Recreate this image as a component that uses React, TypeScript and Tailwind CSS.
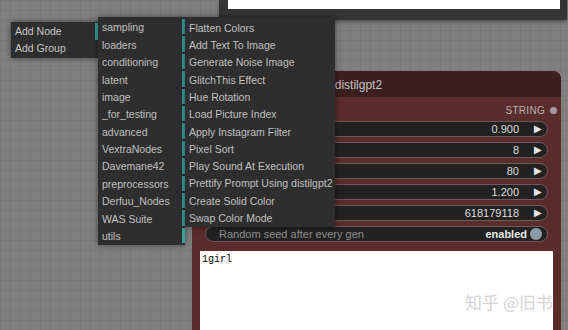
import React from 'react';

const categories = [
  'sampling',
  'loaders',
  'conditioning',
  'latent',
  'image',
  '_for_testing',
  'advanced',
  'VextraNodes',
  'Davemane42',
  'preprocessors',
  'Derfuu_Nodes',
  'WAS Suite',
  'utils',
];

const wasNodes = [
  'Flatten Colors',
  'Add Text To Image',
  'Generate Noise Image',
  'GlitchThis Effect',
  'Hue Rotation',
  'Load Picture Index',
  'Apply Instagram Filter',
  'Pixel Sort',
  'Play Sound At Execution',
  'Prettify Prompt Using distilgpt2',
  'Create Solid Color',
  'Swap Color Mode',
];

const numberWidgets = ['0.900', '8', '80', '1.200', '618179118'];

const gridBg =
  'bg-[#808080] bg-[linear-gradient(to_right,rgba(0,0,0,0.05)_1px,transparent_1px),linear-gradient(to_bottom,rgba(0,0,0,0.05)_1px,transparent_1px)] bg-[size:10px_10px]';

const NumberWidget: React.FC<{ value: string }> = ({ value }) => (
  <div className="h-[16px] rounded-full bg-[#222222] border border-[#6e5a5a] flex items-center justify-end pr-[5px] text-[11px] text-[#dddddd]">
    <span>{value}</span>
    <span className="ml-[15px] text-[10px] leading-none text-[#e6e6e6]">▶</span>
  </div>
);

export default function App() {
  return (
    <div
      className={`relative w-[568px] h-[330px] overflow-hidden ${gridBg}`}
      style={{ fontFamily: '"Liberation Sans", Arial, sans-serif' }}
    >
      {/* node above, mostly off screen */}
      <div className="absolute left-[219px] top-0 w-[348px] h-[20px] bg-[#353535] shadow-[0_2px_4px_rgba(0,0,0,0.35)]">
        <div className="ml-[9px] w-[332px] h-[9px] bg-white" />
      </div>

      {/* Prettify Prompt node */}
      <div className="absolute left-[192px] top-[71px] w-[369px] h-[270px] rounded-t-[8px] bg-[#5a2c2c] flex flex-col">
        <div className="h-[26px] shrink-0 rounded-t-[8px] bg-[#3d1e1e] flex items-center pl-[26px] pt-[1px] text-[12px] text-[#c4c4c4]">
          Prettify Prompt Using distilgpt2
        </div>
        <div className="pt-[6px] flex flex-col">
          <div className="h-[14px] flex items-center justify-end pr-[4px] text-[10px] text-[#b5b5b5] tracking-[0.3px]">
            <span>STRING</span>
            <span className="ml-[5px] w-[7px] h-[7px] rounded-full bg-[#a49ca4]" />
          </div>
          <div className="mt-[4px] mx-[13px] flex flex-col gap-[5px]">
            {numberWidgets.map((v) => (
              <NumberWidget key={v} value={v} />
            ))}
            <div className="h-[16px] rounded-full bg-[#222222] border border-[#6e5a5a] flex items-center justify-between pl-[13px] pr-[5px] text-[11px]">
              <span className="text-[#8e8e8e]">Random seed after every gen</span>
              <span className="flex items-center">
                <span className="font-bold text-[#e8e8e8]">enabled</span>
                <span className="ml-[3px] w-[12px] h-[12px] rounded-full bg-[#8d9cab]" />
              </span>
            </div>
          </div>
          <div className="mt-[9px] mx-[8px] h-[90px] bg-white relative">
            <div
              className="pl-[2px] pt-[1px] text-[10px] text-black"
              style={{ fontFamily: '"Liberation Mono", monospace' }}
            >
              1girl
            </div>
            <div
              className="absolute right-[0px] top-[38px] text-[17px] text-[#d4d4d4]"
              style={{ fontFamily: '"Noto Sans CJK SC", sans-serif' }}
            >
              知乎 @旧书
            </div>
          </div>
        </div>
      </div>

      {/* context menu, level 1 */}
      <div className="absolute left-[11px] top-[22px] w-[87px] h-[36px] pt-[1px] bg-[#2e2e2e] shadow-[0_0_6px_rgba(0,0,0,0.5)] text-[10.5px] text-[#c6c6c6]">
        <div className="h-[17px] flex items-center pl-[4px] pt-[1px] border-r-[3px] border-[#35a39d]">Add Node</div>
        <div className="h-[17px] flex items-center pl-[4px] pt-[1px]">Add Group</div>
      </div>

      {/* context menu, level 2 */}
      <div className="absolute left-[98px] top-[17px] w-[87px] h-[228px] pt-[1px] bg-[#2e2e2e] shadow-[0_0_6px_rgba(0,0,0,0.5)] text-[10.5px] text-[#c0c0c0]">
        {categories.map((c) => (
          <div key={c} className="h-[17.4px] py-[1px]">
            <div className="h-full flex items-center pl-[4px] pt-[3px] border-r-[3px] border-[#35a39d]">{c}</div>
          </div>
        ))}
      </div>

      {/* context menu, level 3 */}
      <div className="absolute left-[185px] top-[17px] w-[150px] h-[210px] pt-[2px] bg-[#2e2e2e] shadow-[0_0_6px_rgba(0,0,0,0.5)] text-[10.5px] text-[#c0c0c0]">
        {wasNodes.map((n) => (
          <div key={n} className="h-[17.3px] flex items-center pl-[4px] pt-[2px] whitespace-nowrap">
            {n}
          </div>
        ))}
      </div>
    </div>
  );
}
